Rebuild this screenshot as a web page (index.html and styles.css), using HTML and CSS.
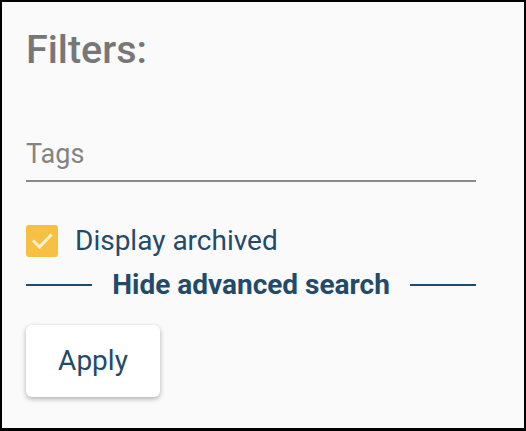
FILE: index.html
```html
<!DOCTYPE html>
<html lang="en">
<head>
<meta charset="utf-8">
<title>Filters</title>
<link rel="stylesheet" href="styles.css">
</head>
<body>
<div class="panel">
  <h2 class="title">Filters:</h2>
  <div class="field"><span class="placeholder">Tags</span></div>
  <label class="check-row">
    <span class="checkbox">
      <svg viewBox="0 0 32 32" width="32" height="32" aria-hidden="true"><path d="M8 16.5 L13.5 22 L24.5 10.5" fill="none" stroke="#fdf0d2" stroke-width="3" stroke-linecap="square"/></svg>
    </span>
    <span class="check-label">Display archived</span>
  </label>
  <div class="divider">
    <span class="rule"></span>
    <span class="divider-text">Hide advanced search</span>
    <span class="rule"></span>
  </div>
  <div class="actions">
    <button class="apply" type="button">Apply</button>
  </div>
</div>
</body>
</html>
```
FILE: styles.css
```css
html, body {
  margin: 0;
  padding: 0;
  height: 100%;
}
body {
  background: #000;
  font-family: Roboto, "Liberation Sans", sans-serif;
}
.panel {
  box-sizing: border-box;
  height: 431px;
  width: 526px;
  border: 2px solid #000;
  border-bottom-width: 3px;
  background: #fafafa;
  padding: 28px 48px 0 24px;
  display: flex;
  flex-direction: column;
}
.title {
  margin: 0;
  font-size: 39.5px;
  line-height: 1;
  font-weight: 500;
  color: #777;
}
.field {
  margin-top: 71px;
  padding-bottom: 12px;
  border-bottom: 2px solid #8a8a8a;
}
.placeholder {
  display: block;
  font-size: 27px;
  line-height: 1;
  font-weight: 400;
  color: #838383;
}
.check-row {
  margin-top: 43px;
  display: flex;
  align-items: center;
  gap: 17px;
}
.checkbox {
  width: 32px;
  height: 32px;
  border-radius: 3px;
  background: #f6c143;
  display: flex;
}
.check-label {
  font-size: 28px;
  line-height: 1;
  color: #234a69;
}
.divider {
  margin-top: 14px;
  display: flex;
  align-items: center;
  gap: 20px;
}
.rule {
  flex: 1;
  height: 2px;
  background: #234a69;
}
.divider-text {
  font-size: 28px;
  line-height: 1;
  font-weight: 700;
  color: #234a69;
}
.actions {
  margin-top: 26px;
  display: flex;
}
.apply {
  width: 134px;
  height: 72px;
  border: none;
  border-radius: 6px;
  background: #fff;
  box-shadow: 0 2px 5px rgba(0, 0, 0, 0.3);
  font-family: Roboto, "Liberation Sans", sans-serif;
  font-size: 28px;
  line-height: 1;
  font-weight: 400;
  color: #234a69;
  padding: 0;
}
```
